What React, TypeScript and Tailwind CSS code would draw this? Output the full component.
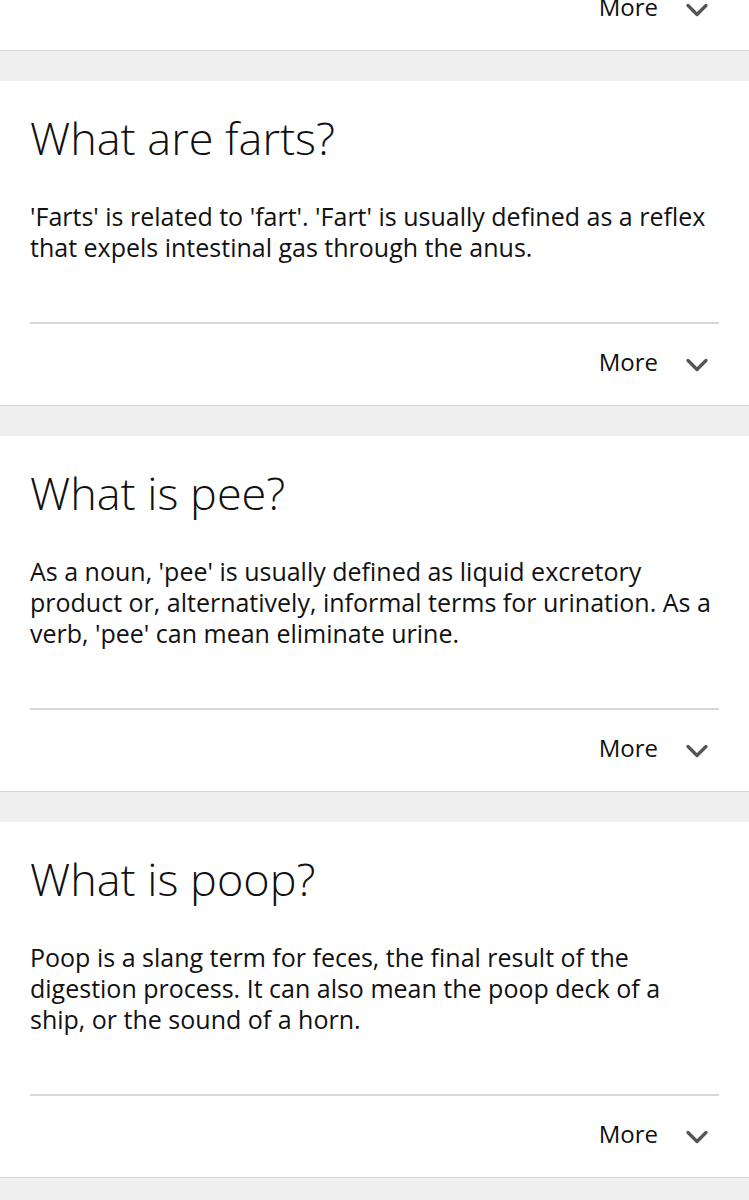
import { ChevronDown } from "lucide-react";

type Entry = { title: string; body: string };

const entries: Entry[] = [
  {
    title: "What are farts?",
    body: "'Farts' is related to 'fart'. 'Fart' is usually defined as a reflex that expels intestinal gas through the anus.",
  },
  {
    title: "What is pee?",
    body: "As a noun, 'pee' is usually defined as liquid excretory product or, alternatively, informal terms for urination. As a verb, 'pee' can mean eliminate urine.",
  },
  {
    title: "What is poop?",
    body: "Poop is a slang term for feces, the final result of the digestion process. It can also mean the poop deck of a ship, or the sound of a horn.",
  },
];

// The expand row at the foot of every answer card.
function MoreRow() {
  return (
    <div className="flex h-[81px] items-center justify-end pr-[34px] pb-[6px]">
      <span className="text-[24px] text-[#111]">More</span>
      <ChevronDown
        size={36}
        strokeWidth={2.2}
        className="ml-[21px] mt-[6px] text-[#555]"
      />
    </div>
  );
}

function Gap() {
  return <div className="h-[30px] bg-[#efefef]" />;
}

function AnswerCard({ title, body }: Entry) {
  return (
    <section className="border-b border-[#d6d6d6] bg-white">
      <div className="px-[30px] pt-[29px]">
        <h2 className="text-[45px] font-light leading-[56px] text-[#111]">
          {title}
        </h2>
        <p className="mt-[35px] text-[25px] leading-[31px] text-[#111]">
          {body}
        </p>
        <div className="mt-[59px] h-[2px] bg-[#d8d8d8]" />
      </div>
      <MoreRow />
    </section>
  );
}

export default function App() {
  return (
    <div
      className="min-h-[1200px] overflow-hidden bg-[#efefef]"
      style={{ fontFamily: '"Open Sans", "Noto Sans", sans-serif' }}
    >
      {/* previous card, scrolled mostly out of view */}
      <section className="-mt-[31px] border-b border-[#d6d6d6] bg-white">
        <MoreRow />
      </section>
      {entries.map((e) => (
        <div key={e.title}>
          <Gap />
          <AnswerCard {...e} />
        </div>
      ))}
    </div>
  );
}
